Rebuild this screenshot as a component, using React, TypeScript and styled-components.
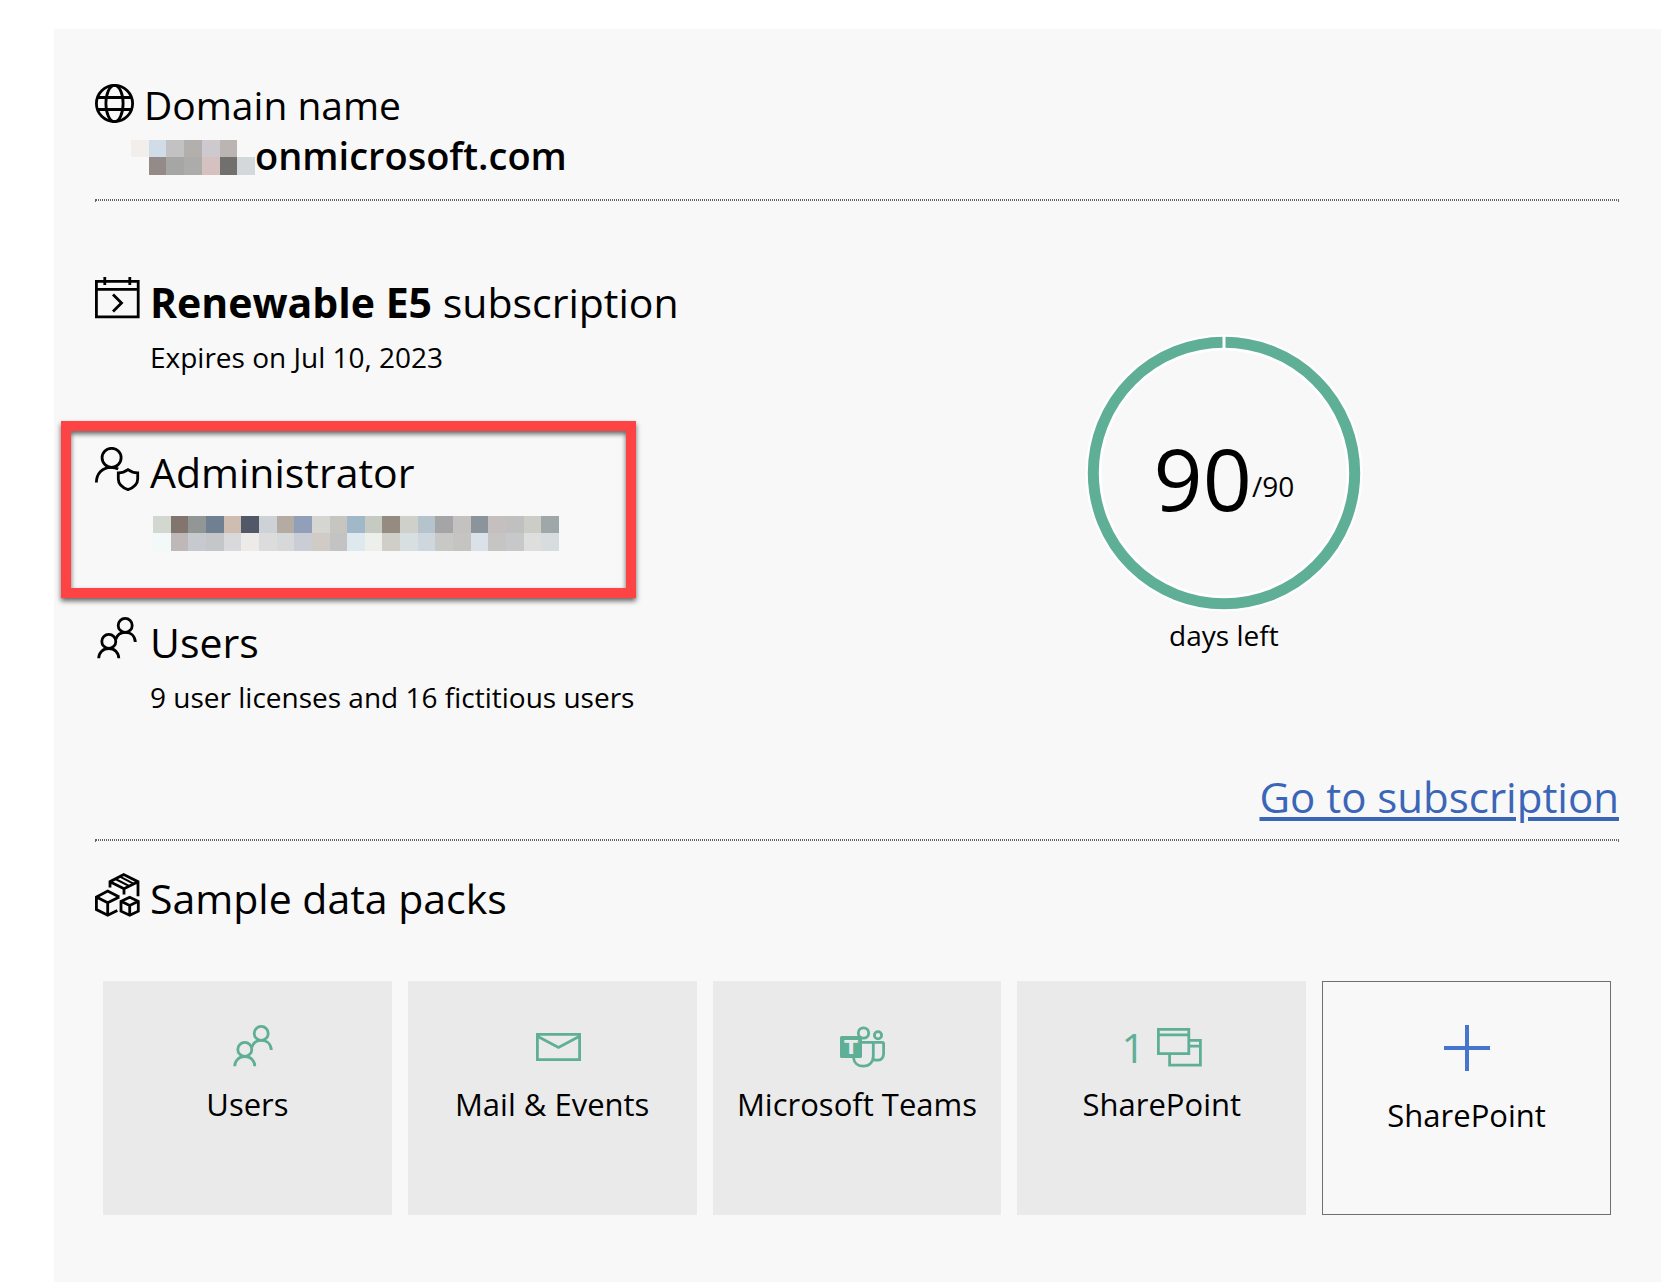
import React from "react";
import styled, { createGlobalStyle } from "styled-components";

const GREEN = "#5faf96";
const BLUE = "#3b66b8";

const GlobalStyle = createGlobalStyle`
  * { box-sizing: border-box; }
  body {
    margin: 0;
    background: #ffffff;
    color: #000000;
    font-family: "Open Sans", "Noto Sans", sans-serif;
  }
`;

const Page = styled.div`
  display: flex;
  min-height: 100vh;
  padding: 29px 19px 0 54px;
`;

const Panel = styled.main`
  flex: 1;
  padding: 51px 42px 67px 41px;
  background: #f8f8f8;
`;

const Heading = styled.h2<{ $small?: boolean }>`
  display: flex;
  align-items: flex-start;
  gap: 10px;
  margin: 0;
  font-size: ${(p) => (p.$small ? 39 : 41)}px;
  font-weight: 400;
  line-height: 50px;
  white-space: nowrap;
`;

const Icon = styled.svg<{ $stroke?: number }>`
  flex: none;
  fill: none;
  stroke: currentColor;
  stroke-width: ${(p) => p.$stroke ?? 2.8};
`;

const DomainRow = styled.p`
  display: flex;
  align-items: flex-start;
  margin: 0;
  padding-left: 36px;
  font-size: 38px;
  font-weight: 600;
  line-height: 50px;
`;

const Mosaic = styled.span<{ $columns: number; $width: number }>`
  display: grid;
  grid-template-columns: repeat(${(p) => p.$columns}, 1fr);
  grid-template-rows: 17px 18px;
  width: ${(p) => p.$width}px;
`;

const DomainMosaic = styled(Mosaic)`
  margin-top: 10px;
`;

const AdminMosaic = styled(Mosaic)`
  margin: 19px 0 0 3px;
`;

const Cell = styled.span<{ $color: string }>`
  background: ${(p) => p.$color};
`;

const Divider = styled.hr<{ $top: number }>`
  height: 2px;
  margin: ${(p) => p.$top}px 0 0;
  border: 1px dotted #666666;
`;

const Subscription = styled.section`
  display: grid;
  grid-template-columns: 13fr 14fr;
  padding-top: 76px;
`;

const Facts = styled.div`
  display: grid;
  grid-auto-rows: 104px;
  row-gap: 66px;
`;

const Fact = styled.div`
  position: relative;
`;

const Detail = styled.div`
  padding-left: 55px;
`;

const DetailText = styled.p`
  margin: 12px 0 0;
  font-size: 28px;
  line-height: 36px;
  white-space: nowrap;
`;

const Highlight = styled.div`
  position: absolute;
  top: -26px;
  left: -34px;
  width: 575px;
  height: 177px;
  border: 10px solid #fd4343;
  box-shadow: 0 3px 5px rgba(0, 0, 0, 0.6), inset 0 3px 5px rgba(0, 0, 0, 0.6);
  pointer-events: none;
`;

const Countdown = styled.div`
  display: flex;
  flex-direction: column;
  align-items: center;
  padding-top: 56px;
`;

const Dial = styled.div`
  display: grid;
  place-items: center;

  > * {
    grid-area: 1 / 1;
  }
`;

const DaysLeft = styled.div`
  padding-top: 10px;
  font-size: 86px;
  line-height: 100px;
`;

const DaysTotal = styled.span`
  font-size: 28px;
  line-height: 36px;
  vertical-align: 14px;
`;

const DialLabel = styled.div`
  margin-top: 4px;
  font-size: 28px;
  line-height: 36px;
`;

const LinkRow = styled.div`
  display: flex;
  justify-content: flex-end;
  margin-top: 51px;
`;

const SubscriptionLink = styled.a`
  color: ${BLUE};
  font-size: 42px;
  line-height: 50px;
  text-decoration: underline;
  text-decoration-thickness: 4px;
  text-underline-offset: 4px;
`;

const Packs = styled.section`
  padding-top: 32px;
`;

const Tiles = styled.div`
  display: grid;
  grid-template-columns: repeat(5, 1fr);
  gap: 16px;
  margin: 58px 8px 0;
`;

const Tile = styled.div`
  min-height: 234px;
  padding-top: 41px;
  background: #eaeaea;
  text-align: center;
`;

const TileTop = styled.div`
  display: flex;
  align-items: center;
  justify-content: center;
  gap: 12px;
  height: 50px;
  color: ${GREEN};
  font-size: 41px;
  line-height: 50px;
`;

const TileLabel = styled.div`
  margin-top: 12px;
  font-size: 31px;
  line-height: 40px;
  white-space: nowrap;
`;

const AddTile = styled.button`
  display: flex;
  flex-direction: column;
  align-items: center;
  gap: 24px;
  min-height: 234px;
  padding: 43px 0 0;
  border: 1px solid #707070;
  background: transparent;
  color: #000000;
  font: inherit;
  font-size: 31px;
  line-height: 40px;
  cursor: pointer;
`;

const GlobeIcon = () => (
  <Icon width="39" height="45" viewBox="0 0 39 45" aria-hidden="true">
    <circle cx="19.5" cy="23.5" r="18.1" />
    <ellipse cx="19.5" cy="23.5" rx="8.6" ry="18.1" />
    <path d="M2.5 17.5H36.5M2.5 29.5H36.5" />
  </Icon>
);

const CalendarIcon = () => (
  <Icon width="45" height="45" viewBox="0 0 45 45" aria-hidden="true">
    <path d="M1.4 4.4H43.2V39.9H1.4ZM1.4 12.3H43.2M9.8 0V8M34.8 0V8M18 17.5L26.5 26L18 34.5" />
  </Icon>
);

const AdminIcon = () => (
  <Icon width="45" height="45" viewBox="0 0 45 45" aria-hidden="true">
    <circle cx="16.6" cy="10.8" r="9.5" />
    <path d="M1.4 35.5C1.4 26.5 7.5 20.3 16.2 20.3Q20 20.3 23.2 22" />
    <path d="M33 22.7Q28.5 26 23.3 26V32C23.3 37 27 40.5 33 42.6C39 40.5 42.7 37 42.7 32V26Q37.5 26 33 22.7Z" />
  </Icon>
);

const UsersIcon = () => (
  <Icon width="45" height="45" viewBox="0 0 45 45" aria-hidden="true">
    <circle cx="30.2" cy="8.4" r="7" />
    <circle cx="13.8" cy="24.4" r="7" />
    <path d="M20.8 22.5C22 18 25.5 15.3 30.2 15.3C36 15.3 40 19 40.3 25" />
    <path d="M3.7 41.3C3.9 35.5 8 31.5 13.8 31.5S23.6 35.5 23.8 41.3" />
  </Icon>
);

const BoxesIcon = () => (
  <Icon width="45" height="45" viewBox="0 0 45 45" aria-hidden="true">
    <path d="M15 14.5V8.7L28.7 1.6L43 8.7V23.2M15 8.7L29 15.7L43 8.7M29 15.7V21.5" />
    <path d="M25 3.7L38.4 10.6M20.4 6L33.9 12.8" strokeWidth="2" style={{ strokeWidth: 2 }} />
    <path d="M24.3 24L12.7 18L1.4 24V36.6L12.7 42.2L22.3 37.4M1.4 24L12.7 29.8L24.3 24M12.7 29.8V42.2" />
    <path d="M34.7 24.2L26 28.3V38.2L34.7 42.2L43.3 38.2V28.3ZM26 28.3L34.7 32.4L43.3 28.3M34.7 32.4V42.2" />
  </Icon>
);

const MailIcon = () => (
  <Icon width="45" height="45" viewBox="0 0 45 45" aria-hidden="true">
    <path d="M1.4 9.4H43.6V34.6H1.4ZM1.4 11.3L22.5 22.5L43.6 11.3" />
  </Icon>
);

const TeamsMark = styled.text`
  fill: #eaeaea;
  stroke: none;
  font-family: "DejaVu Sans", sans-serif;
  font-size: 20px;
  font-weight: 700;
`;

const TeamsIcon = () => (
  <Icon width="45" height="45" viewBox="0 0 45 45" aria-hidden="true">
    <circle cx="23.5" cy="8" r="5.2" />
    <circle cx="38" cy="10.3" r="3.6" />
    <path d="M22 17.4H42.2Q43.6 17.4 43.6 18.8V28.5C43.6 32.7 41 35.2 37.4 35.2Q35 35.2 33.4 34.4" />
    <path d="M33.3 17.4V31C33.3 37 29.3 41.2 23.5 41.2C18 41.2 14 38 13.6 33" />
    <rect x="0" y="11" width="22" height="22" rx="1.5" fill="currentColor" stroke="none" />
    <TeamsMark x="11" y="29" textAnchor="middle">T</TeamsMark>
  </Icon>
);

const SitesIcon = () => (
  <Icon width="45" height="45" viewBox="0 0 45 45" aria-hidden="true">
    <path d="M1.4 4.4H31.8V28.7H1.4ZM1.4 9.8H31.8" />
    <path d="M31.8 15.4H43.4V40.2H12.6V28.7M31.8 21.2H43.4" />
  </Icon>
);

const PlusIcon = () => (
  <Icon $stroke={4} width="46" height="46" viewBox="0 0 46 46" color="#4575cd" aria-hidden="true">
    <path d="M23 0V46M0 23H46" />
  </Icon>
);

const DialRing = () => (
  <Icon $stroke={11} width="280" height="280" viewBox="0 0 280 280" aria-hidden="true">
    <circle cx="140" cy="140" r="136" stroke="#ffffff" style={{ strokeWidth: 5 }} />
    <circle cx="140" cy="140" r="125" stroke="#ffffff" style={{ strokeWidth: 5 }} />
    <circle cx="140" cy="140" r="130.7" stroke={GREEN} />
    <path d="M140 2V16" stroke="#ffffff" style={{ strokeWidth: 3 }} />
  </Icon>
);

const domainCells = [
  "#f2eeeb", "#d0dce8", "#c2c2c2", "#b2afac", "#cec8cf", "#bab5b2", "transparent",
  "transparent", "#948a88", "#a6a6a4", "#acacaa", "#d6c1c1", "#71706e", "#d3d8da",
];

const adminCells = [
  "#d2d7d0", "#82756f", "#929796", "#6f8092", "#d0bdb2", "#515868", "#ccd2d6", "#b4aca2",
  "#929fb8", "#d5d6d1", "#c6c5c0", "#a1b8c8", "#c5cac3", "#958b80", "#cfd0ca", "#b4c3cc",
  "#a5a5a8", "#c4c2c0", "#8b939b", "#c6bfc0", "#c0c0c0", "#cdcdc7", "#9fa7a9",
  "#f3f8f9", "#beb8b9", "#c6cacf", "#c4c6c8", "#d9d9db", "#edebe9", "#dcdcdc", "#d7d8da",
  "#cacdd6", "#d1cbc5", "#c3c3c4", "#dee9ef", "#edefec", "#d0cec9", "#d7dfe1", "#ced6de",
  "#c8c8c7", "#c5c4c2", "#dae1e8", "#c6c5c4", "#c7c8ca", "#dddedd", "#d7dcdf",
];

const tiles = [
  { label: "Users", icon: <UsersIcon />, count: "" },
  { label: "Mail & Events", icon: <MailIcon />, count: "" },
  { label: "Microsoft Teams", icon: <TeamsIcon />, count: "" },
  { label: "SharePoint", icon: <SitesIcon />, count: "1" },
];

export default function App() {
  return (
    <>
      <GlobalStyle />
      <Page>
        <Panel>
          <Heading $small>
            <GlobeIcon />
            <span>Domain name</span>
          </Heading>
          <DomainRow>
            <DomainMosaic $columns={7} $width={124}>
              {domainCells.map((color, i) => (
                <Cell key={i} $color={color} />
              ))}
            </DomainMosaic>
            <span>onmicrosoft.com</span>
          </DomainRow>
          <Divider $top={19} />

          <Subscription>
            <Facts>
              <Fact>
                <Heading>
                  <CalendarIcon />
                  <span>
                    <b>Renewable E5</b> subscription
                  </span>
                </Heading>
                <Detail>
                  <DetailText>Expires on Jul 10, 2023</DetailText>
                </Detail>
              </Fact>
              <Fact>
                <Heading>
                  <AdminIcon />
                  <span>Administrator</span>
                </Heading>
                <Detail>
                  <AdminMosaic $columns={23} $width={406}>
                    {adminCells.map((color, i) => (
                      <Cell key={i} $color={color} />
                    ))}
                  </AdminMosaic>
                </Detail>
                <Highlight />
              </Fact>
              <Fact>
                <Heading>
                  <UsersIcon />
                  <span>Users</span>
                </Heading>
                <Detail>
                  <DetailText>9 user licenses and 16 fictitious users</DetailText>
                </Detail>
              </Fact>
            </Facts>
            <Countdown>
              <Dial>
                <DialRing />
                <DaysLeft>
                  90<DaysTotal>/90</DaysTotal>
                </DaysLeft>
              </Dial>
              <DialLabel>days left</DialLabel>
            </Countdown>
          </Subscription>
          <LinkRow>
            <SubscriptionLink href="#subscription">Go to subscription</SubscriptionLink>
          </LinkRow>
          <Divider $top={17} />

          <Packs>
            <Heading>
              <BoxesIcon />
              <span>Sample data packs</span>
            </Heading>
            <Tiles>
              {tiles.map((tile) => (
                <Tile key={tile.label}>
                  <TileTop>
                    <span>{tile.count}</span>
                    {tile.icon}
                  </TileTop>
                  <TileLabel>{tile.label}</TileLabel>
                </Tile>
              ))}
              <AddTile type="button">
                <PlusIcon />
                <span>SharePoint</span>
              </AddTile>
            </Tiles>
          </Packs>
        </Panel>
      </Page>
    </>
  );
}
